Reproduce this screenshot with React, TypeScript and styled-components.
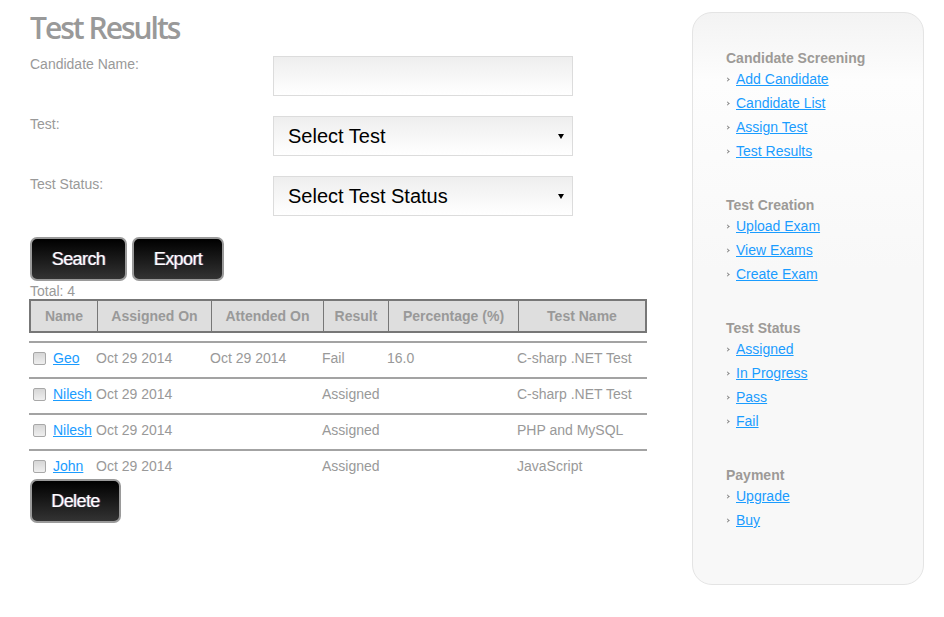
import React from "react";
import styled, { createGlobalStyle } from "styled-components";

const Global = createGlobalStyle`
  html, body { margin: 0; padding: 0; background: #fff; }
  body { font-family: "Liberation Sans", Arial, sans-serif; font-size: 14px; color: #999; }
`;

const Page = styled.div`
  display: flex;
  align-items: flex-start;
  padding: 0 20px 0 30px;
  gap: 44px;
`;

const Main = styled.div`
  width: 618px;
  display: flex;
  flex-direction: column;
  align-items: flex-start;
`;

const Title = styled.h1`
  margin: 10px 0 0 0;
  font-family: "Open Sans", sans-serif;
  font-weight: 600;
  font-size: 30px;
  line-height: 36px;
  letter-spacing: -2px;
  color: #999;
`;

const Form = styled.div`
  display: grid;
  grid-template-columns: 243px 300px;
  grid-auto-rows: 60px;
  margin-top: 10px;
`;

const Label = styled.div`
  font-size: 14px;
  line-height: 16px;
  color: #999;
`;

const Field = styled.div`
  box-sizing: border-box;
  height: 40px;
  border: 1px solid #dcdcdc;
  background: linear-gradient(#eeeeee, #ffffff);
  display: flex;
  align-items: center;
  justify-content: space-between;
  padding: 0 8px 0 14px;
  font-size: 20px;
  color: #000;
`;

const Arrow = styled.span`
  width: 0;
  height: 0;
  border-left: 3px solid transparent;
  border-right: 3px solid transparent;
  border-top: 5px solid #000;
`;

const Buttons = styled.div`
  display: flex;
  gap: 5px;
  margin-top: 1px;
`;

const Button = styled.button<{ $w: number }>`
  box-sizing: border-box;
  width: ${(p) => p.$w}px;
  height: 44px;
  padding: 0;
  border: 2px solid #9a9a9a;
  border-radius: 7px;
  background: linear-gradient(#000000, #333333);
  color: #fff;
  font-family: "Liberation Sans", Arial, sans-serif;
  font-size: 18px;
  letter-spacing: -0.6px;
  text-shadow: 1px 0 0 rgba(120, 120, 255, 0.5), -1px 0 0 rgba(255, 200, 80, 0.35);
  cursor: pointer;
`;

const Total = styled.div`
  font-size: 14px;
  line-height: 16px;
  color: #999;
  margin-top: 2px;
`;

const cols = "67px 114px 112px 65px 130px 130px";

const Table = styled.div`
  width: 618px;
  margin-left: -1px;
  display: flex;
  flex-direction: column;
`;

const Head = styled.div`
  display: grid;
  grid-template-columns: 66px 114px 112px 65px 130px 127px;
  box-sizing: border-box;
  height: 34px;
  border: 2px solid #777;
  background: #dedede;
`;

const Th = styled.div<{ $first?: boolean }>`
  display: flex;
  align-items: center;
  justify-content: center;
  font-weight: bold;
  font-size: 14px;
  color: #999;
  border-left: ${(p) => (p.$first ? "none" : "1px solid #777")};
`;

const Rows = styled.div`
  display: flex;
  flex-direction: column;
  gap: 6px;
  margin-top: 8px;
`;

const Row = styled.div`
  display: grid;
  grid-template-columns: ${cols};
  border-top: 2px solid #a3a3a3;
  padding: 7px 0 5px;
  line-height: 16px;
  font-size: 14px;
  color: #999;
`;

const Td = styled.div`
  display: flex;
  align-items: center;
  white-space: nowrap;
`;

const Check = styled.input`
  appearance: none;
  box-sizing: border-box;
  margin: 0 7px 0 4px;
  width: 13px;
  height: 13px;
  border: 1px solid #a8a8a8;
  border-radius: 2px;
  background: linear-gradient(#d6d6d6, #efefef);
`;

const Link = styled.a`
  color: #1a9cff;
  text-decoration: underline;
`;

const Sidebar = styled.aside`
  box-sizing: border-box;
  width: 232px;
  margin-top: 12px;
  border: 1px solid #e4e4e4;
  border-radius: 20px;
  background: linear-gradient(#f3f3f3 0%, #fdfdfd 12%, #f8f8f8 45%, #f8f8f8 100%);
  padding: 36px 20px 52px 33px;
  display: flex;
  flex-direction: column;
  gap: 33px;
`;

const Section = styled.div`
  display: flex;
  flex-direction: column;
`;

const SideHead = styled.div`
  font-weight: bold;
  font-size: 14px;
  line-height: 18px;
  color: #9d9a97;
`;

const SideItem = styled.div`
  display: flex;
  align-items: center;
  height: 24px;
`;

const Chevron = styled.span`
  box-sizing: border-box;
  width: 3px;
  height: 3px;
  margin: 0 7px 0 0;
  border-top: 1px solid #888;
  border-right: 1px solid #888;
  transform: rotate(45deg);
`;

const SideLink = styled.a`
  line-height: 24px;
  font-size: 14px;
  color: #1a9cff;
  text-decoration: underline;
`;

const rows = [
  { name: "Geo", assigned: "Oct 29 2014", attended: "Oct 29 2014", result: "Fail", pct: "16.0", test: "C-sharp .NET Test" },
  { name: "Nilesh", assigned: "Oct 29 2014", attended: "", result: "Assigned", pct: "", test: "C-sharp .NET Test" },
  { name: "Nilesh", assigned: "Oct 29 2014", attended: "", result: "Assigned", pct: "", test: "PHP and MySQL" },
  { name: "John", assigned: "Oct 29 2014", attended: "", result: "Assigned", pct: "", test: "JavaScript" },
];

const sections = [
  { title: "Candidate Screening", links: ["Add Candidate", "Candidate List", "Assign Test", "Test Results"] },
  { title: "Test Creation", links: ["Upload Exam", "View Exams", "Create Exam"] },
  { title: "Test Status", links: ["Assigned", "In Progress", "Pass", "Fail"] },
  { title: "Payment", links: ["Upgrade", "Buy"] },
];

const headers = ["Name", "Assigned On", "Attended On", "Result", "Percentage (%)", "Test Name"];

export default function App() {
  return (
    <>
      <Global />
      <Page>
        <Main>
          <Title>Test Results</Title>
          <Form>
            <Label>Candidate Name:</Label>
            <Field />
            <Label>Test:</Label>
            <Field>
              Select Test
              <Arrow />
            </Field>
            <Label>Test Status:</Label>
            <Field>
              Select Test Status
              <Arrow />
            </Field>
          </Form>
          <Buttons>
            <Button $w={97}>Search</Button>
            <Button $w={92}>Export</Button>
          </Buttons>
          <Total>Total: 4</Total>
          <Table>
            <Head>
              {headers.map((h, i) => (
                <Th key={h} $first={i === 0}>
                  {h}
                </Th>
              ))}
            </Head>
            <Rows>
              {rows.map((r, i) => (
                <Row key={i}>
                  <Td>
                    <Check type="checkbox" />
                    <Link href="#">{r.name}</Link>
                  </Td>
                  <Td>{r.assigned}</Td>
                  <Td>{r.attended}</Td>
                  <Td>{r.result}</Td>
                  <Td>{r.pct}</Td>
                  <Td>{r.test}</Td>
                </Row>
              ))}
            </Rows>
          </Table>
          <Button $w={91}>Delete</Button>
        </Main>
        <Sidebar>
          {sections.map((s) => (
            <Section key={s.title}>
              <SideHead>{s.title}</SideHead>
              {s.links.map((l) => (
                <SideItem key={l}>
                  <Chevron />
                  <SideLink href="#">{l}</SideLink>
                </SideItem>
              ))}
            </Section>
          ))}
        </Sidebar>
      </Page>
    </>
  );
}
